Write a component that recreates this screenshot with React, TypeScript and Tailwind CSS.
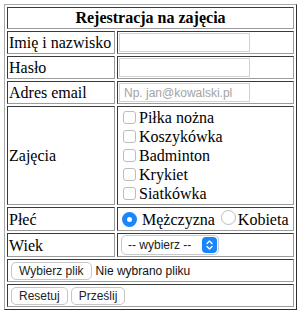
const cell =
  "border border-t-[#3a3a3a] border-l-[#3a3a3a] border-b-[#9c9c9c] border-r-[#9c9c9c] p-px";

const sports = ["Piłka nożna", "Koszykówka", "Badminton", "Krykiet", "Siatkówka"];

function Checkbox() {
  return (
    <span className="inline-block w-[13px] h-[13px] ml-[4px] mr-[3px] rounded-[3px] border border-[#bdbdbd] bg-white shrink-0" />
  );
}

function Radio({ checked }: { checked?: boolean }) {
  if (checked) {
    return (
      <span className="flex items-center justify-center w-[15px] h-[15px] rounded-full bg-[#1a86fb] shrink-0">
        <span className="w-[5px] h-[5px] rounded-full bg-white" />
      </span>
    );
  }
  return <span className="inline-block w-[15px] h-[15px] rounded-full border border-[#bdbdbd] bg-white shrink-0" />;
}

function Button({ children }: { children: React.ReactNode }) {
  return (
    <span className="inline-flex items-center h-[18px] px-[7px] rounded-[5px] border border-[#c6c6c6] bg-white text-[12px] leading-none text-[#222] font-['Liberation_Sans',sans-serif]">
      {children}
    </span>
  );
}

export default function App() {
  return (
    <div className="bg-white w-[301px] h-[314px] pt-1 pl-1 font-['Liberation_Serif',serif] text-black text-[16px]">
      <table className="table-fixed w-[293px] border-separate border-spacing-[2px] border border-t-[#a8a8a8] border-l-[#a8a8a8] border-b-[#2e2e2e] border-r-[#2e2e2e]">
        <colgroup>
          <col className="w-[108px]" />
          <col />
        </colgroup>
        <tbody>
          <tr>
            <td colSpan={2} className={`${cell} h-[22px] text-center font-bold leading-[18px]`}>
              Rejestracja na zajęcia
            </td>
          </tr>
          <tr>
            <td className={`${cell} h-[23px] leading-[19px]`}>Imię i nazwisko</td>
            <td className={`${cell} h-[23px]`}>
              <input className="block w-[131px] h-[19px] border border-[#d2d2d2] bg-white outline-none" />
            </td>
          </tr>
          <tr>
            <td className={`${cell} h-[23px] leading-[19px]`}>Hasło</td>
            <td className={`${cell} h-[23px]`}>
              <input type="password" className="block w-[131px] h-[19px] border border-[#d2d2d2] bg-white outline-none" />
            </td>
          </tr>
          <tr>
            <td className={`${cell} h-[23px] leading-[19px]`}>Adres email</td>
            <td className={`${cell} h-[23px]`}>
              <input
                placeholder="Np. jan@kowalski.pl"
                className="block w-[131px] h-[19px] px-[4px] border border-[#d2d2d2] bg-white outline-none text-[12px] font-['Liberation_Sans',sans-serif] placeholder:text-[#a3a3a3]"
              />
            </td>
          </tr>
          <tr>
            <td className={`${cell} leading-[19px]`}>Zajęcia</td>
            <td className={cell}>
              {sports.map((s) => (
                <div key={s} className="flex items-center h-[19px] leading-[19px] whitespace-nowrap">
                  <Checkbox />
                  {s}
                </div>
              ))}
            </td>
          </tr>
          <tr>
            <td className={`${cell} h-[24px] leading-[19px]`}>Płeć</td>
            <td className={`${cell} h-[24px]`}>
              <div className="flex items-center whitespace-nowrap leading-[19px] pl-[3px]">
                <Radio checked />
                <span className="ml-[5px]">Mężczyzna</span>
                <span className="ml-[6px]">
                  <Radio />
                </span>
                <span className="ml-[2px]">Kobieta</span>
              </div>
            </td>
          </tr>
          <tr>
            <td className={`${cell} h-[23px] leading-[19px]`}>Wiek</td>
            <td className={`${cell} h-[23px]`}>
              <div className="ml-[2px] flex items-center justify-between w-[98px] h-[20px] pl-[6px] pr-px rounded-[5px] border border-[#c8c8c8] bg-white font-['Liberation_Sans',sans-serif] text-[12px] text-[#222]">
                <span>-- wybierz --</span>
                <span className="flex items-center justify-center w-[15px] h-[16px] rounded-[4px] bg-[#1a86fb]">
                  <svg width="7" height="10" viewBox="0 0 7 10" fill="none" stroke="white" strokeWidth="1.4" strokeLinecap="round" strokeLinejoin="round">
                    <path d="M1 3.5 3.5 1 6 3.5" />
                    <path d="M1 6.5 3.5 9 6 6.5" />
                  </svg>
                </span>
              </div>
            </td>
          </tr>
          <tr>
            <td colSpan={2} className={`${cell} h-[23px]`}>
              <div className="flex items-center pl-[2px]">
                <Button>Wybierz plik</Button>
                <span className="ml-[4px] text-[12px] text-[#111] font-['Liberation_Sans',sans-serif]">
                  Nie wybrano pliku
                </span>
              </div>
            </td>
          </tr>
          <tr>
            <td colSpan={2} className={`${cell} h-[23px]`}>
              <div className="flex items-center gap-[3px] pl-[2px]">
                <Button>Resetuj</Button>
                <Button>Prześlij</Button>
              </div>
            </td>
          </tr>
        </tbody>
      </table>
    </div>
  );
}
